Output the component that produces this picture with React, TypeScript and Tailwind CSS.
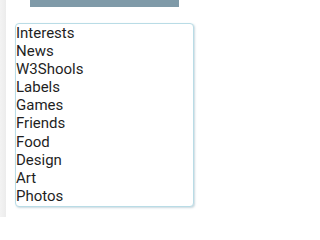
const items = ['Interests', 'News', 'W3Shools', 'Labels', 'Games', 'Friends', 'Food', 'Design', 'Art', 'Photos'];

export default function App() {
  return (
    <div className="relative flex h-[217px] w-[200px] bg-white">
      {/* sidebar edge */}
      <div className="w-[6px] shrink-0 bg-gradient-to-r from-[#f3f3f3] to-[#ececec]" />
      <div className="flex flex-1 flex-col">
        <div className="ml-[24px] h-[7px] w-[149px] bg-[#7f9aa8]" />
        <div
          className="ml-[9px] mt-[16px] w-[179px] rounded-[4px] border border-[#b9dce6] bg-white pb-[1px] shadow-[1px_1px_2px_rgba(140,170,185,0.45)]"
          style={{ fontFamily: 'Roboto, "Liberation Sans", sans-serif' }}
        >
          {items.map((item) => (
            <div key={item} className="text-[15px] leading-[18.1px] text-[#1f1f1f]">
              {item}
            </div>
          ))}
        </div>
      </div>
    </div>
  );
}
